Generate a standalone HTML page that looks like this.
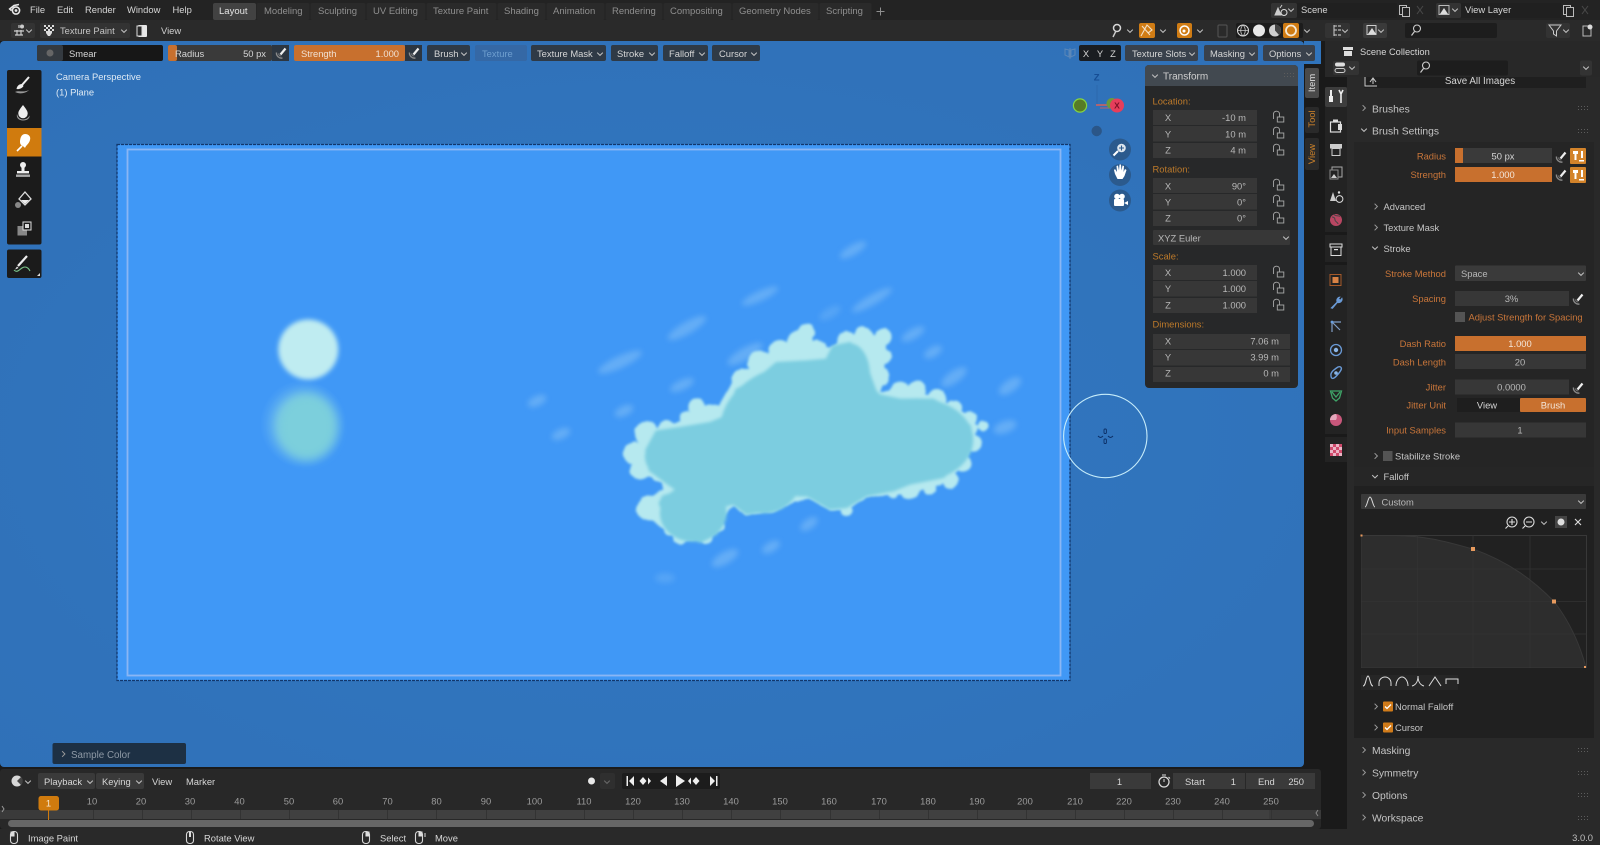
<!DOCTYPE html>
<html lang="en"><head><meta charset="utf-8"><title>Blender Texture Paint</title>
<style>
html,body{margin:0;padding:0;background:#1a1a1a;overflow:hidden;width:1600px;height:845px}
svg{display:block}
text{font-family:"Liberation Sans",sans-serif;font-size:9.4px;fill:#c6c6c6;dominant-baseline:central}
.m{text-anchor:middle}.e{text-anchor:end}
.h{font-size:10.3px;fill:#c4c4c4}
.t{font-size:9.5px;fill:#8f8f8f}
.w{fill:#d6d6d6}
.o{fill:#c9763a;text-anchor:end}
.l{fill:#bd7a2a;font-size:9.4px}
.f{font-size:9.4px;fill:#b8b8b8}
.ic{fill:none;stroke:#d0d0d0;stroke-width:1.2}
</style></head><body>
<svg xmlns="http://www.w3.org/2000/svg" width="1600" height="845" viewBox="0 0 1600 845">
<defs>
<radialGradient id="vg" cx=".5" cy=".55" r=".75"><stop offset="0" stop-color="#3278c2"/><stop offset="1" stop-color="#2f70b7"/></radialGradient>
<radialGradient id="halo"><stop offset=".55" stop-color="#7fcbe6" stop-opacity=".85"/><stop offset="1" stop-color="#6cb8f2" stop-opacity="0"/></radialGradient>
<filter id="b1" x="-30%" y="-30%" width="160%" height="160%"><feGaussianBlur stdDeviation="2.4"/></filter>
<filter id="b3" x="-40%" y="-100%" width="180%" height="300%"><feGaussianBlur stdDeviation="3"/></filter>
<filter id="b4" x="-30%" y="-30%" width="160%" height="160%"><feGaussianBlur stdDeviation="5"/></filter>
<filter id="cl" x="-5%" y="-5%" width="110%" height="110%"><feTurbulence type="fractalNoise" baseFrequency=".12" numOctaves="2" seed="4"/><feDisplacementMap in="SourceGraphic" scale="3" xChannelSelector="R" yChannelSelector="G"/><feGaussianBlur stdDeviation="1.4"/></filter>
<filter id="cb" x="-5%" y="-5%" width="110%" height="110%"><feGaussianBlur stdDeviation="1.7"/></filter>
<path id="cd" d="M-2.8-1.4L0 1.4 2.8-1.4" fill="none" stroke="#c0c0c0" stroke-width="1"/>
<path id="cr" d="M-1.4-2.8L1.4 0-1.4 2.8" fill="none" stroke="#9a9a9a" stroke-width="1"/>
<g id="pen"><path d="M-4.500-.5a5 5 0 0 0 6 5.500" fill="none" stroke="#8a8a8a" stroke-width="1.400"/><path d="M-2.500.5a3 3 0 0 0 2.800 2.500" fill="none" stroke="#777" stroke-width="1"/><path d="M-.5 1.500L4.500-4.500" stroke="#eee" stroke-width="2.200"/></g>
<g id="lock" fill="none" stroke="#a8a8a8" stroke-width=".9"><rect x="3.300" y="0" width="6.500" height="5"/><path d="M-.5 2V-3a3 2.700 0 0 1 6-.3V0"/></g>
<g id="grip" fill="#5c5c5c"><rect x="0" y="0" width="1" height="1"/><rect x="3" y="0" width="1" height="1"/><rect x="6" y="0" width="1" height="1"/><rect x="9" y="0" width="1" height="1"/><rect x="0" y="3" width="1" height="1"/><rect x="3" y="3" width="1" height="1"/><rect x="6" y="3" width="1" height="1"/><rect x="9" y="3" width="1" height="1"/></g>
<g id="ms" fill="none" stroke="#d8d8d8" stroke-width="1.1"><rect x="-3.5" y="-6" width="7" height="12" rx="3"/><path d="M0-6V-1" /></g>
<clipPath id="vp"><rect x="0" y="41" width="1304" height="726" rx="4"/></clipPath>
</defs>

<rect width="1600" height="845" fill="#1a1a1a"/>

<!-- top bar -->
<rect width="1600" height="20" fill="#232323"/>
<rect y="20" width="1325" height="21" fill="#2a2a2a"/>
<rect x="1325" y="20" width="275" height="21" fill="#2a2a2a"/>
<g fill="none" stroke="#e8e8e8" stroke-width="1.6"><circle cx="16" cy="10.5" r="3.6"/><path d="M9 9.5l5-4 5-1M10 10h3"/></g><circle cx="16" cy="10.5" r="1.4" fill="#e8e8e8"/>
<text x="30" y="9.5" class="w">File</text><text x="57" y="9.5" class="w">Edit</text><text x="85" y="9.5" class="w">Render</text><text x="127" y="9.5" class="w">Window</text><text x="172.5" y="9.5" class="w">Help</text>
<rect x="213" y="3" width="43" height="17" rx="2" fill="#424242"/>
<g>
<rect x="256.500" y="3" width="53" height="17" rx="2" fill="#2a2a2a"/><rect x="310.500" y="3" width="55" height="17" rx="2" fill="#2a2a2a"/><rect x="366.500" y="3" width="59" height="17" rx="2" fill="#2a2a2a"/><rect x="426.500" y="3" width="70" height="17" rx="2" fill="#2a2a2a"/><rect x="497.500" y="3" width="48" height="17" rx="2" fill="#2a2a2a"/><rect x="546.500" y="3" width="58" height="17" rx="2" fill="#2a2a2a"/><rect x="605.500" y="3" width="57" height="17" rx="2" fill="#2a2a2a"/><rect x="663.500" y="3" width="68" height="17" rx="2" fill="#2a2a2a"/><rect x="732.500" y="3" width="86" height="17" rx="2" fill="#2a2a2a"/><rect x="819.500" y="3" width="52" height="17" rx="2" fill="#2a2a2a"/>
</g>
<text x="219" y="11.500" style="font-size:9.5px;fill:#e4e4e4">Layout</text>
<text x="264" y="11.500" class="t">Modeling</text><text x="318" y="11.500" class="t">Sculpting</text><text x="373" y="11.500" class="t">UV Editing</text><text x="433" y="11.500" class="t">Texture Paint</text><text x="504" y="11.500" class="t">Shading</text><text x="553" y="11.500" class="t">Animation</text><text x="612" y="11.500" class="t">Rendering</text><text x="670" y="11.500" class="t">Compositing</text><text x="739" y="11.500" class="t">Geometry Nodes</text><text x="826" y="11.500" class="t">Scripting</text>
<path d="M876.500 11.500h8M880.500 7.500v8" stroke="#8f8f8f" stroke-width="1"/>

<!-- scene selector -->
<rect x="1271" y="3" width="26" height="15" rx="2" fill="#333"/>
<path d="M1275 15l3-7 3 7zM1280 8l2-3" fill="#ccc" stroke="#ccc"/><circle cx="1284" cy="12.500" r="3" fill="none" stroke="#ddd"/>
<use href="#cd" x="1291" y="10"/>
<rect x="1297" y="3" width="100" height="15" fill="#202020"/><text x="1301" y="9.500" class="w">Scene</text>
<g fill="none" stroke="#bbb"><rect x="1399.500" y="5.500" width="7" height="9"/><rect x="1402.500" y="7.500" width="7" height="9" fill="#232323"/></g>
<path d="M1417 6l6 8M1423 6l-6 8" stroke="#4a4a4a"/>
<rect x="1436" y="3" width="25" height="15" rx="2" fill="#333"/>
<rect x="1439" y="5.500" width="10" height="9" fill="none" stroke="#bbb"/><path d="M1440 14l4-6 4 6z" fill="#ddd"/>
<use href="#cd" x="1455" y="10"/>
<rect x="1461" y="3" width="100" height="15" fill="#202020"/><text x="1465" y="9.500" class="w">View Layer</text>
<g fill="none" stroke="#bbb"><rect x="1563.500" y="5.500" width="7" height="9"/><rect x="1566.500" y="7.500" width="7" height="9" fill="#232323"/></g>
<path d="M1582 6l6 8M1588 6l-6 8" stroke="#4a4a4a"/>

<!-- viewport header -->
<rect x="11" y="23" width="24" height="15" rx="2" fill="#333"/>
<path d="M15 35h8M17 35v-5M21 35v-5M14 31h10M19 25v3" stroke="#ccc" stroke-width="1.2" fill="none"/><circle cx="22" cy="26.500" r="2" fill="#ccc"/><use href="#cd" x="29" y="31"/>
<rect x="40" y="23" width="90" height="15" rx="2" fill="#333"/>
<path d="M44 25h2v2h-2zM48 25h2v2h-2zM52 25h2v2h-2zM46 27h2v2h-2zM50 27h2v2h-2zM44 29h2v2h-2zM48 29h2v2h-2zM52 29h2v2h-2z" fill="#ddd"/><path d="M46 31h6v2l-2 3h-2l-2-3z" fill="#ddd"/>
<text x="60" y="30.500" style="fill:#c4c4c4">Texture Paint</text><use href="#cd" x="124" y="31"/>
<rect x="138" y="25" width="9" height="12" rx="1" fill="#e8e8e8"/><rect x="137" y="26" width="5" height="10" fill="#2a2a2a" stroke="#ddd"/>
<text x="161" y="30.500" style="fill:#d0d0d0">View</text>

<circle cx="1117" cy="28" r="3.500" fill="none" stroke="#d8d8d8" stroke-width="1.5"/><path d="M1113 37l3-6" stroke="#ccc" stroke-width="1.400"/><use href="#cd" x="1130" y="31"/>
<rect x="1139" y="23" width="16" height="15" rx="2" fill="#d07c14"/><path d="M1141 36l6-11 5 5-4 3M1142 26l8 9" fill="none" stroke="#f3e0c5" stroke-width="1.100"/><use href="#cd" x="1163" y="31"/>
<rect x="1177" y="23" width="15" height="15" rx="2" fill="#d07c14"/><circle cx="1184.500" cy="30.500" r="4.500" fill="none" stroke="#fff" stroke-width="1.500"/><circle cx="1184" cy="31" r="1.500" fill="#fff"/><use href="#cd" x="1200" y="31"/>
<rect x="1218" y="25" width="9" height="12" rx="1" fill="none" stroke="#555"/>
<rect x="1236" y="23" width="67" height="15" rx="2" fill="#1c1c1c"/>
<circle cx="1243" cy="30.500" r="5.500" fill="none" stroke="#ddd"/><path d="M1237.500 30.500h11M1243 25c-3 3-3 8 0 11M1243 25c3 3 3 8 0 11" fill="none" stroke="#ccc" stroke-width=".8"/>
<circle cx="1259" cy="30.500" r="6" fill="#e8e8e8"/>
<circle cx="1275" cy="30.500" r="6" fill="#cfcfcf"/><path d="M1275 30.500V24.500a6 6 0 0 1 4 10.500z" fill="#444"/>
<rect x="1283" y="23" width="16" height="15" rx="2" fill="#d07c14"/><circle cx="1291" cy="30.500" r="5" fill="none" stroke="#f5e8d4" stroke-width="1.800"/>
<use href="#cd" x="1307" y="31"/>

<!-- outliner header -->
<rect x="1325" y="23" width="25" height="15" rx="2" fill="#333"/><path d="M1334 25v11M1334 26h3M1334 30h3M1334 35h3" stroke="#ccc" fill="none"/><path d="M1338 26h3M1338 30h3M1338 35h3" stroke="#ddd"/><use href="#cd" x="1345" y="31"/>
<rect x="1363" y="23" width="24" height="15" rx="2" fill="#3a3a3a"/><rect x="1367" y="25.500" width="9" height="9" fill="none" stroke="#ccc"/><path d="M1368 34l4-6 4 6z" fill="#ddd"/><use href="#cd" x="1381" y="31"/>
<rect x="1405" y="23" width="92" height="15" rx="2" fill="#1d1d1d"/><circle cx="1417" cy="28.500" r="3.500" fill="none" stroke="#ccc" stroke-width="1.100"/><path d="M1414.500 31.500l-3 4" stroke="#ccc" stroke-width="1.200"/>
<rect x="1546" y="23" width="24" height="15" rx="2" fill="#333"/><path d="M1549 25h12l-4.500 6v5l-3-2v-3z" fill="none" stroke="#ccc"/><use href="#cd" x="1566" y="31"/>
<rect x="1583" y="26" width="8" height="10" fill="none" stroke="#bbb"/><circle cx="1590" cy="27" r="2.500" fill="#ddd"/>
<rect x="1325" y="41" width="275" height="19" fill="#282828"/>
<rect x="1343" y="47" width="10" height="3" fill="#ddd"/><path d="M1344 51h8v5h-8z" fill="#ddd"/>
<text x="1360" y="52" class="w" style="font-size:9.300px">Scene Collection</text>

<!-- viewport -->
<g clip-path="url(#vp)">
<rect x="0" y="41" width="1304" height="726" fill="url(#vg)"/>
<!-- canvas -->
<rect x="117" y="144.500" width="953" height="536" fill="#4098f6"/>
<rect x="117" y="144.500" width="953" height="536" fill="none" stroke="#12376c" stroke-width="1.300" stroke-dasharray="3 1"/>
<rect x="127.500" y="149.500" width="933" height="526" fill="none" stroke="#8ab6f4" stroke-width="1.800"/>

<!-- streaks -->
<g fill="#7dbcf7" opacity=".6" filter="url(#b3)">
<ellipse cx="853" cy="250" rx="15" ry="5" transform="rotate(-30 853 250)"/>
<ellipse cx="760" cy="296" rx="20" ry="5" transform="rotate(-25 760 296)"/>
<ellipse cx="872" cy="300" rx="23" ry="5" transform="rotate(-30 872 300)"/>
<ellipse cx="687" cy="328" rx="22" ry="6" transform="rotate(-30 687 328)"/>
<ellipse cx="620" cy="362" rx="24" ry="6" transform="rotate(-25 620 362)"/>
<ellipse cx="682" cy="385" rx="13" ry="5" transform="rotate(-25 682 385)"/>
<ellipse cx="624" cy="411" rx="10" ry="5" transform="rotate(-25 624 411)"/>
<ellipse cx="537" cy="401" rx="10" ry="5" transform="rotate(-25 537 401)"/>
<ellipse cx="561" cy="434" rx="10" ry="5" transform="rotate(-25 561 434)"/>
<ellipse cx="913" cy="334" rx="13" ry="5" transform="rotate(-30 913 334)"/>
<ellipse cx="933" cy="352" rx="10" ry="5" transform="rotate(-30 933 352)"/>
<ellipse cx="954" cy="377" rx="15" ry="6" transform="rotate(-35 954 377)"/>
<ellipse cx="1010" cy="386" rx="13" ry="6" transform="rotate(-35 1010 386)"/>
<ellipse cx="1005" cy="427" rx="12" ry="6" transform="rotate(-20 1005 427)"/>
<ellipse cx="809" cy="524" rx="10" ry="5" transform="rotate(-35 809 524)"/>
<ellipse cx="725" cy="558" rx="15" ry="6" transform="rotate(-30 725 558)"/>
<ellipse cx="771" cy="547" rx="10" ry="5" transform="rotate(-30 771 547)"/>
<ellipse cx="665" cy="578" rx="10" ry="5" opacity=".6"/>
<ellipse cx="745" cy="354" rx="20" ry="6" transform="rotate(-30 745 354)"/>
<ellipse cx="830" cy="313" rx="12" ry="5" transform="rotate(-30 830 313)" opacity=".6"/>
</g>

<!-- sun and reflection -->
<circle cx="308.300" cy="349.500" r="30" fill="#bfecf1" filter="url(#b1)"/>
<ellipse cx="303" cy="424" rx="43" ry="44" fill="url(#halo)" opacity=".85"/>
<ellipse cx="307" cy="427" rx="30" ry="33" fill="#7ccfdc" filter="url(#b4)"/>

<!-- cloud: light rim lobes -->
<g filter="url(#cl)"><g transform="translate(600 300) scale(.3333)" fill="#b6e9ef">
<path d="M100 470L140 400 240 370 300 320 360 320 400 250 470 190 590 130 650 140 690 150 730 120 800 105 850 120 850 240 830 285 920 265 1000 295 1090 340 1130 380 1110 440 1070 510 1020 550 930 575 800 585 740 625 690 625 630 590 580 600 520 630 440 640 400 610 370 640 350 690 320 715 240 715 190 680 130 640 130 610 160 590 195 570 190 545 120 510Z" stroke="#b6e9ef" stroke-width="10" stroke-linejoin="round"/>
<circle cx="430" cy="240" r="35"/><circle cx="480" cy="190" r="38"/><circle cx="540" cy="155" r="35"/><circle cx="600" cy="130" r="40"/><circle cx="620" cy="95" r="25"/><circle cx="650" cy="150" r="30"/>
<circle cx="740" cy="125" r="30"/><circle cx="790" cy="110" r="30"/><circle cx="850" cy="110" r="25"/><circle cx="850" cy="170" r="25"/><circle cx="840" cy="230" r="28"/>
<circle cx="900" cy="275" r="30"/><circle cx="950" cy="270" r="28"/><circle cx="1010" cy="295" r="28"/><circle cx="1060" cy="325" r="25"/><circle cx="1110" cy="355" r="22"/><circle cx="1150" cy="378" r="16"/><circle cx="1120" cy="430" r="25"/><circle cx="1090" cy="490" r="25"/><circle cx="1050" cy="540" r="25"/>
<circle cx="990" cy="565" r="20"/><circle cx="930" cy="570" r="28"/><circle cx="880" cy="580" r="15"/><circle cx="740" cy="630" r="18"/><circle cx="590" cy="585" r="20"/>
<circle cx="330" cy="340" r="28"/><circle cx="290" cy="320" r="25"/><circle cx="260" cy="355" r="22"/><circle cx="200" cy="385" r="25"/><circle cx="140" cy="400" r="35"/><circle cx="105" cy="460" r="35"/><circle cx="120" cy="510" r="30"/><circle cx="170" cy="530" r="14"/>
<circle cx="150" cy="625" r="38"/><circle cx="130" cy="630" r="22"/><circle cx="210" cy="690" r="18"/><circle cx="240" cy="715" r="20"/><circle cx="320" cy="715" r="18"/><circle cx="360" cy="680" r="14"/>
</g></g>
<!-- cloud: teal body -->
<g filter="url(#cb)"><g transform="translate(600 300) scale(.3333)" fill="#7bcde0">
<path d="M140 450L170 395 240 385 330 370 380 350 410 270 470 240 530 190 620 185 680 180 700 140 750 130 790 170 810 230 830 285 900 300 1000 300 1070 340 1110 380 1110 420 1080 480 1030 530 930 550 880 570 800 585 740 620 690 625 630 590 590 570 560 600 500 630 440 640 400 610 360 620 340 660 350 700 300 725 240 695 200 660 180 610 190 590 240 575 190 540 150 510Z" stroke="#7bcde0" stroke-width="8" stroke-linejoin="round"/>
<ellipse cx="620" cy="390" rx="260" ry="200"/>
<ellipse cx="950" cy="420" rx="170" ry="125"/>
<ellipse cx="260" cy="470" rx="125" ry="85"/>
<ellipse cx="280" cy="640" rx="100" ry="85"/>
<ellipse cx="490" cy="540" rx="110" ry="100"/>
<ellipse cx="700" cy="520" rx="80" ry="105"/>
<ellipse cx="750" cy="225" rx="60" ry="95"/>
</g></g>

<!-- brush cursor -->
<circle cx="1105.300" cy="436" r="41.700" fill="none" stroke="#c6ecfa" stroke-width="1.100"/>
<path d="M1098 436c2 2 3 2 5 0M1108 436c2 2 3 2 5 0" fill="none" stroke="#0c2f66" stroke-width="1"/>
<rect x="1104" y="429" width="2.400" height="4.500" rx="1" fill="none" stroke="#0c2f66" stroke-width=".9"/><rect x="1104" y="439" width="2.400" height="4.500" rx="1" fill="none" stroke="#0c2f66" stroke-width=".9"/>

<text x="56" y="76.700" style="fill:#dfeaf4">Camera Perspective</text>
<text x="56" y="92" style="fill:#dfeaf4">(1) Plane</text>

<!-- gizmo -->
<text x="1096.700" y="78" class="m" style="fill:#164d94;font-size:9.500px;font-weight:bold">Z</text>
<path d="M1097 85v20" stroke="#2c68ad"/>
<circle cx="1096.700" cy="131" r="5.200" fill="#2b5688"/>
<path d="M1096 105h17" stroke="#d8605a" stroke-width="1.400"/><path d="M1100 108h10" stroke="#c0606a" stroke-width="1"/>
<circle cx="1080" cy="105.500" r="6.600" fill="#577b25" stroke="#85d542" stroke-width="1.200"/>
<circle cx="1112" cy="103.500" r="5.500" fill="#6d9a3c"/>
<circle cx="1117" cy="105.500" r="7" fill="#e63e5b"/>
<text x="1117" y="105.500" class="m" style="fill:#7c1026;font-size:8.500px;font-weight:bold">X</text>

<g fill="#2b5a8d"><circle cx="1120" cy="149.500" r="11"/><circle cx="1120" cy="175" r="11"/><circle cx="1120" cy="200.500" r="11"/></g>
<circle cx="1121.500" cy="148" r="4.300" fill="#dfe7ee"/><path d="M1121.500 145.500v5M1119 148h5" stroke="#2b5a8d" stroke-width="1.100"/><path d="M1118 151l-4.500 4.500" stroke="#fff" stroke-width="2"/>
<path d="M1115 174l-1-4 1-1 2 3-.5-6 1.500-.5 1 5 .5-6 1.500 0 .5 6 1-5 1.500.5-.5 6 1.500-3 1.500 1-2 6-2 3h-5z" fill="#fff"/>
<rect x="1114" y="199" width="10" height="7" rx="1" fill="#fff"/><circle cx="1117" cy="196.500" r="2.800" fill="#fff"/><circle cx="1122" cy="196.500" r="2.800" fill="#fff"/><path d="M1124 203l4-2v4z" fill="#fff"/>

<!-- Sample color -->
<rect x="52.500" y="743" width="133.500" height="21" rx="2" fill="#1d3044"/>
<use href="#cr" x="63.500" y="754" />
<text x="71" y="755.500" style="fill:#8e99a5;font-size:9.800px">Sample Color</text>
</g>

<!-- tool header strip -->
<rect x="1304" y="41" width="17" height="23" fill="#3074bc"/>
<rect x="37" y="45" width="126" height="16" rx="2" fill="#171717"/>
<rect x="37" y="45" width="26" height="16" rx="2" fill="#343a40"/>
<circle cx="50" cy="53" r="3.500" fill="#666"/>
<text x="69" y="53.500" class="w">Smear</text>
<rect x="168" y="45" width="104" height="16" rx="2" fill="#3a3a3a"/><rect x="168" y="45" width="9" height="16" rx="2" fill="#c8702e"/>
<text x="175" y="53.500" class="w">Radius</text><text x="266" y="53.500" class="e w">50 px</text>
<rect x="272" y="45" width="17" height="16" fill="#2d3640"/><use href="#pen" x="281" y="53"/>
<rect x="294" y="45" width="111" height="16" rx="2" fill="#c8702e"/>
<text x="301" y="53.500" style="fill:#f0e0d2">Strength</text><text x="399" y="53.500" class="e" style="fill:#f0e0d2">1.000</text>
<rect x="405" y="45" width="17" height="16" fill="#2d3640"/><use href="#pen" x="414" y="53"/>
<g fill="#2f3a46">
<rect x="427" y="45" width="43" height="16" rx="2"/><rect x="531" y="45" width="75" height="16" rx="2"/><rect x="611" y="45" width="47" height="16" rx="2"/><rect x="663" y="45" width="45" height="16" rx="2"/><rect x="712" y="45" width="48" height="16" rx="2"/>
<rect x="1125" y="45" width="73" height="16" rx="2" fill="#39414c"/><rect x="1204" y="45" width="54" height="16" rx="2" fill="#39414c"/><rect x="1263" y="45" width="52" height="16" rx="2" fill="#39414c"/>
</g>
<rect x="475" y="45" width="52" height="16" rx="2" fill="#3568a5"/>
<text x="434" y="53.500" class="w">Brush</text><use href="#cd" x="464" y="54"/>
<text x="482" y="53.500" style="fill:#6f9fcf">Texture</text>
<text x="537" y="53.500" class="w">Texture Mask</text><use href="#cd" x="600" y="54"/>
<text x="617" y="53.500" class="w">Stroke</text><use href="#cd" x="652" y="54"/>
<text x="669" y="53.500" class="w">Falloff</text><use href="#cd" x="702" y="54"/>
<text x="719" y="53.500" class="w">Cursor</text><use href="#cd" x="754" y="54"/>
<path d="M1070 48v11M1069 50l-4-1v6l4 2zM1071 50l4-1v6l-4 2z" fill="none" stroke="#5b87b8"/>
<rect x="1079" y="45" width="42" height="16" rx="2" fill="#1a1d21"/>
<text x="1086" y="53.500" class="m w">X</text><text x="1100" y="53.500" class="m w">Y</text><text x="1113" y="53.500" class="m w">Z</text>
<text x="1132" y="53.500" class="w">Texture Slots</text><use href="#cd" x="1192" y="54"/>
<text x="1210" y="53.500" class="w">Masking</text><use href="#cd" x="1252" y="54"/>
<text x="1269" y="53.500" class="w">Options</text><use href="#cd" x="1309" y="54"/>

<!-- left toolbar -->
<rect x="7" y="70" width="34.500" height="174.500" rx="2" fill="#1b1b1b"/>
<rect x="7" y="128" width="34.500" height="28.500" fill="#d07b0e"/>
<rect x="7" y="249.500" width="34.500" height="28.500" rx="2" fill="#1b1b1b"/>
<!-- brush -->
<path d="M29 77l-7 8" stroke="#eee" stroke-width="2"/><path d="M22 84c-3 0-5 2-5.500 5 2.500.5 5.500-.5 7-3z" fill="#eee"/><path d="M15 92c4-2 8 1 14-2-4 4-10 4-14 2z" fill="#999"/>
<!-- drop -->
<path d="M23 105c3 4 4.700 6 4.700 8.500a4.700 4.700 0 0 1-9.400 0c0-2.500 1.700-4.500 4.700-8.500z" fill="#eee"/><path d="M17 114c-1 4 2 6.500 6 6.500s7-2 6.500-5c-1 2-3 4-6.500 4-3 0-5-2-6-5.500z" fill="#999"/>
<!-- smear -->
<path d="M25 134c4 0 6 3 5 6-1 4-4 5-5 8-1-2-5-2-5-6 0-3 1-8 5-8z" fill="#fff"/><path d="M17 151l5-5" stroke="#fff" stroke-width="1.600"/>
<!-- stamp -->
<circle cx="23" cy="165" r="3" fill="#eee"/><rect x="21.500" y="165" width="3" height="6" fill="#eee"/><rect x="17" y="171" width="12" height="2.400" fill="#eee"/><rect x="16" y="174.500" width="14" height="2.400" fill="#aaa"/>
<!-- fill -->
<path d="M25 192l6 7-6 6-6-6z" fill="none" stroke="#ddd" stroke-width="1.300"/><path d="M21 200h8l-4 4z" fill="#eee"/><circle cx="18" cy="205" r="3" fill="#888"/>
<!-- mask -->
<rect x="17.500" y="226" width="9.500" height="9.500" fill="#888"/><rect x="23" y="222" width="8" height="8" fill="#1b1b1b" stroke="#ddd"/><rect x="25" y="224" width="4" height="4" fill="#ddd"/>
<!-- annotate -->
<path d="M27 256l-9 10" stroke="#eee" stroke-width="2.200"/><path d="M17 266.500l-2 3 3.500-1.500z" fill="#eee"/>
<path d="M14 270c3 3 5 0 8-2 3-2 6-1 8 3" fill="none" stroke="#7cc58b" stroke-width="1.100"/>
<path d="M40 276h-3l3-3z" fill="#ddd"/>

<!-- N panel tabs -->
<rect x="1305" y="68" width="14" height="30" rx="2" fill="#4a4a4a"/><rect x="1305" y="107" width="14" height="26" rx="2" fill="#2a2a2a"/><rect x="1305" y="138" width="14" height="32" rx="2" fill="#2a2a2a"/>
<text transform="translate(1311.500 83) rotate(-90)" class="m" style="fill:#dcdcdc">Item</text>
<text transform="translate(1311.500 119) rotate(-90)" class="m" style="fill:#c9802a">Tool</text>
<text transform="translate(1311.500 154) rotate(-90)" class="m" style="fill:#c9802a">View</text>

<!-- Transform panel -->
<rect x="1145" y="65" width="153" height="323" rx="4" fill="#272829"/>
<path d="M1145 86V69a4 4 0 0 1 4-4h145a4 4 0 0 1 4 4v17z" fill="#424950"/>
<use href="#cd" x="1155" y="76"/><text x="1163" y="76.800" class="h" style="font-size:10px;fill:#d0d0d0">Transform</text><use href="#grip" x="1284" y="73"/>
<text x="1152.500" y="101" class="l">Location:</text><text x="1152.500" y="169" class="l">Rotation:</text><text x="1152.500" y="256" class="l">Scale:</text><text x="1152.500" y="324" class="l">Dimensions:</text>
<g fill="#373737">
<rect x="1153" y="110" width="104" height="15"/><rect x="1153" y="126" width="104" height="15.500"/><rect x="1153" y="143" width="104" height="15"/>
<rect x="1153" y="178" width="104" height="15"/><rect x="1153" y="194" width="104" height="15.500"/><rect x="1153" y="211" width="104" height="15"/>
<rect x="1153" y="230" width="137" height="15" rx="1"/>
<rect x="1153" y="265" width="104" height="15"/><rect x="1153" y="281" width="104" height="15.500"/><rect x="1153" y="298" width="104" height="15"/>
<rect x="1153" y="334" width="137" height="15"/><rect x="1153" y="350" width="137" height="15.500"/><rect x="1153" y="367" width="137" height="15"/>
</g>
<g>
<text x="1168" y="117.500" class="m f">X</text><text x="1168" y="134" class="m f">Y</text><text x="1168" y="150" class="m f">Z</text>
<text x="1168" y="186" class="m f">X</text><text x="1168" y="202" class="m f">Y</text><text x="1168" y="218" class="m f">Z</text>
<text x="1168" y="272.500" class="m f">X</text><text x="1168" y="288.500" class="m f">Y</text><text x="1168" y="305" class="m f">Z</text>
<text x="1168" y="341" class="m f">X</text><text x="1168" y="357" class="m f">Y</text><text x="1168" y="373" class="m f">Z</text>
<text x="1246" y="117.500" class="e f">-10 m</text><text x="1246" y="134" class="e f">10 m</text><text x="1246" y="150" class="e f">4 m</text>
<text x="1246" y="186" class="e f">90°</text><text x="1246" y="202" class="e f">0°</text><text x="1246" y="218" class="e f">0°</text>
<text x="1246" y="272.500" class="e f">1.000</text><text x="1246" y="288.500" class="e f">1.000</text><text x="1246" y="305" class="e f">1.000</text>
<text x="1279" y="341" class="e f">7.06 m</text><text x="1279" y="357" class="e f">3.99 m</text><text x="1279" y="373" class="e f">0 m</text>
</g>
<text x="1158" y="238" class="f">XYZ Euler</text><use href="#cd" x="1286" y="238"/>
<use href="#lock" x="1274" y="117"/><use href="#lock" x="1274" y="133"/><use href="#lock" x="1274" y="150"/><use href="#lock" x="1274" y="185"/><use href="#lock" x="1274" y="201"/><use href="#lock" x="1274" y="218"/><use href="#lock" x="1274" y="272"/><use href="#lock" x="1274" y="288"/><use href="#lock" x="1274" y="305"/>

<!-- properties -->
<rect x="1347" y="60" width="253" height="770" fill="#292929"/>
<rect x="1325" y="87" width="22" height="145" fill="#232323"/><rect x="1325" y="235" width="22" height="27" fill="#232323"/><rect x="1325" y="265" width="22" height="169" fill="#232323"/><rect x="1325" y="437" width="22" height="25" fill="#232323"/>
<rect x="1325" y="87" width="22" height="20" rx="2" fill="#3d3d3d"/>

<!-- Save all images (clipped by header) -->
<rect x="1364" y="76" width="222" height="12" fill="#1f1f1f"/>
<text x="1480" y="81.500" class="m w" style="font-size:9.800px">Save All Images</text>
<path d="M1365 77v9h12M1370 82l3-4 3 4M1373 78v6" fill="none" stroke="#ccc"/>

<rect x="1325" y="60" width="275" height="17" fill="#282828"/>
<rect x="1333" y="61" width="26" height="14" rx="2" fill="#333"/>
<rect x="1335" y="62.500" width="10" height="4" rx="2" fill="#ddd"/><rect x="1335" y="68.500" width="10" height="4" rx="2" fill="none" stroke="#ccc"/><use href="#cd" x="1352" y="68"/>
<rect x="1417" y="60.500" width="91" height="15" rx="2" fill="#1d1d1d"/><circle cx="1426" cy="65.500" r="3.500" fill="none" stroke="#ccc" stroke-width="1.100"/><path d="M1423.500 68.500l-3 4" stroke="#ccc" stroke-width="1.200"/>
<rect x="1580" y="60.500" width="12" height="15" rx="2" fill="#333"/><use href="#cd" x="1586" y="68"/>

<!-- prop tabs icons -->
<g>
<path d="M1331 90v10" stroke="#eee" stroke-width="2"/><rect x="1329" y="96" width="4" height="6" fill="#eee"/><path d="M1339 90l2 4 2-4M1341 94v9" fill="none" stroke="#eee" stroke-width="1.600"/>
<rect x="1330.500" y="122" width="10" height="10" fill="none" stroke="#ddd" stroke-width="1.200"/><rect x="1333" y="119.500" width="5" height="3" fill="#ddd"/><rect x="1338" y="124" width="4" height="6" fill="#ddd"/>
<rect x="1330" y="144" width="12" height="4.500" fill="#ccc"/><rect x="1332" y="148.500" width="8" height="7" fill="none" stroke="#ccc"/>
<rect x="1332" y="167" width="10" height="10" fill="none" stroke="#aaa"/><rect x="1330" y="170" width="8" height="9" fill="#222" stroke="#888"/><path d="M1331 178l3-4 3 4z" fill="#ccc"/>
<path d="M1330 201l3-9 3 9z" fill="#ccc"/><circle cx="1339.500" cy="199" r="3.400" fill="none" stroke="#ddd"/><circle cx="1339" cy="192.500" r="1.200" fill="#ddd"/>
<circle cx="1336" cy="220" r="6" fill="#b84662"/><path d="M1332 217c2 0 3 1 3 3s3 2 3 4M1334 214.500c2 2 5 1 6 2" fill="none" stroke="#444"/>
<rect x="1330" y="244" width="12" height="3" fill="none" stroke="#ddd"/><rect x="1331" y="247" width="10" height="8.500" fill="none" stroke="#ddd"/><rect x="1334" y="249" width="4" height="1.200" fill="#ddd"/>
<rect x="1330" y="274.500" width="11" height="11" fill="none" stroke="#a65a2a"/><rect x="1332.500" y="277" width="6" height="6" fill="#d98345"/>
<path d="M1331 308l6-6a3.500 3.500 0 0 1 3-5l-1.500 2 2 1 1.500-2a3.500 3.500 0 0 1-4.500 4.500l-5 6z" fill="#6a9ad6" stroke="#6a9ad6" stroke-width=".7"/>
<path d="M1332 332v-10h9M1332 322l8 8" fill="none" stroke="#7f9dc6" stroke-width="1.200"/><circle cx="1332" cy="322" r="1.400" fill="#6aa0e0"/>
<circle cx="1336" cy="350" r="5.500" fill="none" stroke="#6a9ad6" stroke-width="1.300"/><circle cx="1336" cy="350" r="2.200" fill="#8ab5e6"/>
<path d="M1331 376c-1-4 4-7 7-9 3-1 4 1 3 3s-5 7-7 8-3 0-3-2z" fill="none" stroke="#6a9ad6" stroke-width="1.400"/><circle cx="1336" cy="373" r="1.800" fill="#8ab5e6"/>
<path d="M1330.500 391l11 0-2 7-3.500 3-3.500-3zM1332 392l4 5 4-5" fill="none" stroke="#3fa468" stroke-width="1.300"/>
<circle cx="1336" cy="420" r="6" fill="#c8577b"/><path d="M1336 414a6 6 0 0 1 0 6h-6a6 6 0 0 1 6-6" fill="#e6a8bc"/>
<rect x="1330" y="444" width="12" height="12" fill="#d04a6c"/><path d="M1330 444h3v3h-3zM1336 444h3v3h-3zM1333 447h3v3h-3zM1339 447h3v3h-3zM1330 450h3v3h-3zM1336 450h3v3h-3zM1333 453h3v3h-3zM1339 453h3v3h-3z" fill="#eab5c5"/>
</g>

<!-- headers -->
<use href="#cr" x="1364" y="108"/><text x="1372" y="109.800" class="h">Brushes</text><use href="#grip" x="1578" y="106"/>
<use href="#cd" x="1364" y="130"/><text x="1372" y="131.800" class="h">Brush Settings</text><use href="#grip" x="1578" y="129"/>
<rect x="1354" y="142" width="240" height="602" fill="#252525"/>

<text x="1446" y="156" class="o">Radius</text><rect x="1455" y="148" width="97" height="15" fill="#3a3a3a"/><rect x="1455" y="148" width="8" height="15" fill="#c8702e"/><text x="1503" y="156" class="m w">50 px</text>
<text x="1446" y="174.500" class="o">Strength</text><rect x="1455" y="167" width="97" height="15" fill="#c8702e"/><text x="1503" y="174.500" class="m" style="fill:#f3e6da">1.000</text>
<use href="#pen" x="1561" y="157"/><use href="#pen" x="1561" y="175"/>
<rect x="1570" y="148" width="16" height="16" rx="1" fill="#d3832a"/><rect x="1570" y="167" width="16" height="16" rx="1" fill="#d3832a"/>
<path d="M1573 151h5v3h-1.500v6h-2v-6H1573zM1581 151h2v7h-2zM1579 160h5v1.500h-5z" fill="#fff"/>
<path d="M1573 170h5v3h-1.500v6h-2v-6H1573zM1581 170h2v7h-2zM1579 179h5v1.500h-5z" fill="#fff"/>

<use href="#cr" x="1376" y="206.500"/><text x="1383.500" y="206.700" style="fill:#c6c6c6">Advanced</text>
<use href="#cr" x="1376" y="227.500"/><text x="1383.500" y="227.700" style="fill:#c6c6c6">Texture Mask</text>
<use href="#cd" x="1375" y="248"/><text x="1383.500" y="248.300" style="fill:#c6c6c6">Stroke</text>

<text x="1446" y="273.500" class="o">Stroke Method</text><rect x="1455" y="265.500" width="131" height="15.500" rx="1" fill="#3a3a3a"/><text x="1461" y="273.500" class="f">Space</text><use href="#cd" x="1581" y="274"/>
<text x="1446" y="298.500" class="o">Spacing</text><rect x="1455" y="291" width="114" height="15" fill="#373737"/><text x="1511.500" y="298.500" class="m f">3%</text><use href="#pen" x="1578" y="299"/>
<rect x="1455" y="312" width="10" height="10" fill="#545454"/><text x="1468.500" y="317" style="fill:#c9763a">Adjust Strength for Spacing</text>
<text x="1446" y="343.500" class="o">Dash Ratio</text><rect x="1455" y="336" width="131" height="15" fill="#c8702e"/><text x="1520" y="343.500" class="m" style="fill:#f3e6da">1.000</text>
<text x="1446" y="362" class="o">Dash Length</text><rect x="1455" y="354" width="131" height="15" fill="#373737"/><text x="1520" y="362" class="m f">20</text>
<text x="1446" y="387" class="o">Jitter</text><rect x="1455" y="379.500" width="114" height="15" fill="#373737"/><text x="1511.500" y="387" class="m f">0.0000</text><use href="#pen" x="1578" y="388"/>
<text x="1446" y="405" class="o">Jitter Unit</text><rect x="1457" y="398" width="63" height="14" fill="#1e1e1e"/><rect x="1520" y="398" width="66" height="14" rx="1" fill="#c8702e"/><text x="1487" y="405" class="m w">View</text><text x="1553" y="405" class="m" style="fill:#f3e6da">Brush</text>
<text x="1446" y="430" class="o">Input Samples</text><rect x="1455" y="422.500" width="131" height="15" fill="#373737"/><text x="1520" y="430" class="m f">1</text>
<use href="#cr" x="1376" y="456"/><rect x="1383" y="451" width="9.500" height="10" fill="#545454"/><text x="1395" y="456" style="fill:#c6c6c6">Stabilize Stroke</text>
<rect x="1354" y="467" width="240" height="19" fill="#262626"/>
<use href="#cd" x="1375" y="476.500"/><text x="1383.500" y="476.500" style="fill:#c6c6c6">Falloff</text>
<rect x="1354" y="486" width="240" height="252" fill="#202020"/>
<rect x="1361" y="494" width="225" height="15" rx="1" fill="#3a3a3a"/>
<path d="M1365 507c2 0 3-10 5-10s3 10 5 10" fill="none" stroke="#ddd"/>
<text x="1381.500" y="502" class="f">Custom</text><use href="#cd" x="1581" y="502"/>

<g fill="none" stroke="#ddd" stroke-width="1.100"><circle cx="1512" cy="522" r="5"/><path d="M1509 522h6M1512 519v6M1508 526l-2.500 2.500"/><circle cx="1529" cy="522" r="5"/><path d="M1526 522h6M1525 526l-2.500 2.500"/></g>
<use href="#cd" x="1544" y="523"/><rect x="1555" y="516" width="12" height="12" fill="#444"/><circle cx="1561" cy="522" r="3.500" fill="#ddd"/><path d="M1575 519l6 6M1581 519l-6 6" stroke="#ddd" stroke-width="1.100"/>

<rect x="1361.500" y="535.500" width="225" height="132" fill="#212121" stroke="#383838"/>
<path d="M1361.500 535.500H1395C1430 536 1450 543 1473 549 1510 562 1535 582 1554 601.500 1570 622 1580 645 1586 667.500H1361.500Z" fill="#2d2d2d"/>
<path d="M1417.500 535.500v132M1473 535.500v132M1530 535.500v132M1361.500 569h225M1361.500 601.500h225M1361.500 634h225" stroke="#333" stroke-width=".8"/>
<path d="M1361.500 535.500H1395C1430 536 1450 543 1473 549 1510 562 1535 582 1554 601.500 1570 622 1580 645 1586 667.500" fill="none" stroke="#383838"/>
<rect x="1471" y="547" width="4" height="4" fill="#e79a5e"/><rect x="1552" y="599.500" width="4" height="4" fill="#e79a5e"/><rect x="1360.500" y="534.500" width="2" height="2" fill="#e79a5e"/><rect x="1584" y="666" width="2" height="2" fill="#e79a5e"/>

<rect x="1361" y="675" width="97" height="15" fill="#262626"/>
<g fill="none" stroke="#ddd" stroke-width="1">
<path d="M1363 686c3 0 3-10 5-10s2 10 5 10"/><path d="M1379 686v-3a6 6 0 0 1 12 0v3"/><path d="M1396 686c0-5 3-9 6-9s6 4 6 9"/><path d="M1412 686c4-1 6-5 6-10 0 5 2 9 6 10"/><path d="M1429 686l6-9 6 9"/><path d="M1446 684v-5h12v5"/>
</g>
<use href="#cr" x="1376" y="706.500"/><rect x="1383" y="701.500" width="10" height="10" rx="1" fill="#d07b1a"/><path d="M1385 706.500l2 2 4-4" fill="none" stroke="#fff" stroke-width="1.300"/><text x="1395" y="706.500" style="fill:#c6c6c6">Normal Falloff</text>
<use href="#cr" x="1376" y="727.500"/><rect x="1383" y="722.500" width="10" height="10" rx="1" fill="#d07b1a"/><path d="M1385 727.500l2 2 4-4" fill="none" stroke="#fff" stroke-width="1.300"/><text x="1395" y="727.500" style="fill:#c6c6c6">Cursor</text>

<rect x="1347" y="738" width="253" height="92" fill="#292929"/>
<use href="#cr" x="1364" y="750"/><text x="1372" y="751.300" class="h">Masking</text><use href="#grip" x="1578" y="748"/>
<use href="#cr" x="1364" y="772.500"/><text x="1372" y="773.800" class="h">Symmetry</text><use href="#grip" x="1578" y="771"/>
<use href="#cr" x="1364" y="795"/><text x="1372" y="796.300" class="h">Options</text><use href="#grip" x="1578" y="793"/>
<use href="#cr" x="1364" y="817.500"/><text x="1372" y="818.800" class="h">Workspace</text><use href="#grip" x="1578" y="816"/>

<!-- timeline -->
<rect x="0" y="769" width="1321" height="60" rx="3" fill="#282828"/>
<circle cx="17" cy="781" r="5.500" fill="#d8d8d8"/><path d="M17 781l4-4a5.500 5.500 0 0 1 0 8z" fill="#444"/><use href="#cd" x="28" y="782"/>
<rect x="38" y="773" width="57" height="16" rx="2" fill="#3a3a3a"/><rect x="96" y="773" width="48" height="16" rx="2" fill="#3a3a3a"/>
<text x="44" y="781.500" class="w">Playback</text><use href="#cd" x="90" y="782"/>
<text x="102" y="781.500" class="w">Keying</text><use href="#cd" x="139" y="782"/>
<text x="152" y="781.500" class="w">View</text><text x="186" y="781.500" class="w">Marker</text>
<circle cx="591.500" cy="781" r="3.500" fill="#e8e8e8"/><rect x="600" y="773" width="15" height="16" rx="2" fill="#2f2f2f"/><use href="#cd" x="607" y="782" opacity=".4"/>
<rect x="622" y="773" width="98" height="16" rx="2" fill="#1c1c1c"/>
<g fill="#eee"><path d="M626.500 776h1.500v10h-1.500zM634 776v10l-5-5z"/><path d="M643 777l3.500 4-3.500 4-3.500-4zM648 777.500l3 3.500-3 3.500zM640 777.500v7" /><path d="M667 776v10l-7-5z"/><path d="M676 775v12l9-6z"/><path d="M696 777l3.500 4-3.500 4-3.500-4zM691 777.500v7l-3-3.500z"/><path d="M710 776v10l5-5zM716 776h1.500v10H716z"/></g>
<rect x="1090" y="773" width="61" height="16" fill="#3a3a3a"/><text x="1119.500" y="781.500" class="m w">1</text>
<circle cx="1164" cy="782" r="5" fill="none" stroke="#ddd" stroke-width="1.200"/><path d="M1164 782v-3M1162 775h4M1168.500 777l1.500 1.500" stroke="#ddd" fill="none"/>
<rect x="1173" y="773" width="72" height="16" fill="#3a3a3a"/><rect x="1246" y="773" width="69" height="16" fill="#3a3a3a"/>
<text x="1185" y="781.500" class="w">Start</text><text x="1236" y="781.500" class="e w">1</text>
<text x="1258" y="781.500" class="w">End</text><text x="1304" y="781.500" class="e w">250</text>

<!-- frames -->
<rect x="0" y="810" width="1321" height="9" fill="#3a3a3a"/>
<rect x="48" y="810" width="1221" height="9" fill="#404040"/>
<g stroke="#333"><path d="M93.500 810v9M142.500 810v9M191.500 810v9M240.500 810v9M289.500 810v9M338.500 810v9M387.500 810v9M436.500 810v9M486.500 810v9M535.500 810v9M584.500 810v9M633.500 810v9M682.500 810v9M731.500 810v9M780.500 810v9M830.500 810v9M879.500 810v9M928.500 810v9M977.500 810v9M1026.500 810v9M1075.500 810v9M1124.500 810v9M1173.500 810v9M1222.500 810v9M1271.500 810v9"/></g>
<g style="text-anchor:middle">
<text x="92" y="801" style="fill:#9c9c9c">10</text><text x="141" y="801" style="fill:#9c9c9c">20</text><text x="190" y="801" style="fill:#9c9c9c">30</text><text x="239.500" y="801" style="fill:#9c9c9c">40</text><text x="289" y="801" style="fill:#9c9c9c">50</text><text x="338" y="801" style="fill:#9c9c9c">60</text><text x="387.500" y="801" style="fill:#9c9c9c">70</text><text x="436.500" y="801" style="fill:#9c9c9c">80</text><text x="486" y="801" style="fill:#9c9c9c">90</text><text x="534.500" y="801" style="fill:#9c9c9c">100</text><text x="584" y="801" style="fill:#9c9c9c">110</text><text x="633" y="801" style="fill:#9c9c9c">120</text><text x="682" y="801" style="fill:#9c9c9c">130</text><text x="731" y="801" style="fill:#9c9c9c">140</text><text x="780" y="801" style="fill:#9c9c9c">150</text><text x="829" y="801" style="fill:#9c9c9c">160</text><text x="879" y="801" style="fill:#9c9c9c">170</text><text x="928" y="801" style="fill:#9c9c9c">180</text><text x="977" y="801" style="fill:#9c9c9c">190</text><text x="1025" y="801" style="fill:#9c9c9c">200</text><text x="1075" y="801" style="fill:#9c9c9c">210</text><text x="1124" y="801" style="fill:#9c9c9c">220</text><text x="1173" y="801" style="fill:#9c9c9c">230</text><text x="1222" y="801" style="fill:#9c9c9c">240</text><text x="1271" y="801" style="fill:#9c9c9c">250</text>
</g>
<rect x="38.500" y="796" width="20.500" height="14.500" rx="2.500" fill="#d07b0e"/>
<text x="48.500" y="803" class="m" style="fill:#f5e6d0">1</text>
<path d="M48.500 810v17" stroke="#d07b0e"/>
<rect x="8" y="820" width="1306" height="7" rx="3.500" fill="#666"/>
<path d="M1318 810l-2 3 2 3" fill="none" stroke="#888"/>
<path d="M2 806l2 3-2 3" fill="none" stroke="#999"/>

<!-- status bar -->
<rect x="0" y="829" width="1600" height="16" fill="#292929"/>
<use href="#ms" x="14" y="837.500"/><rect x="10.500" y="831.500" width="3.500" height="5" fill="#ddd"/>
<text x="28" y="838" class="w">Image Paint</text>
<use href="#ms" x="190" y="837.500"/><rect x="189" y="832" width="2" height="5" fill="#ddd"/>
<text x="204" y="838" class="w">Rotate View</text>
<use href="#ms" x="366" y="837.500"/><rect x="366" y="831.500" width="3.500" height="5" fill="#ddd"/>
<text x="380" y="838" class="w">Select</text>
<use href="#ms" x="419" y="837.500"/><rect x="419" y="831.500" width="3.500" height="5" fill="#ddd"/>
<path d="M425 833v4" stroke="#ddd"/>
<text x="435" y="838" class="w">Move</text>
<text x="1593" y="837.500" class="e" style="fill:#bdbdbd">3.0.0</text>
</svg>
</body></html>
